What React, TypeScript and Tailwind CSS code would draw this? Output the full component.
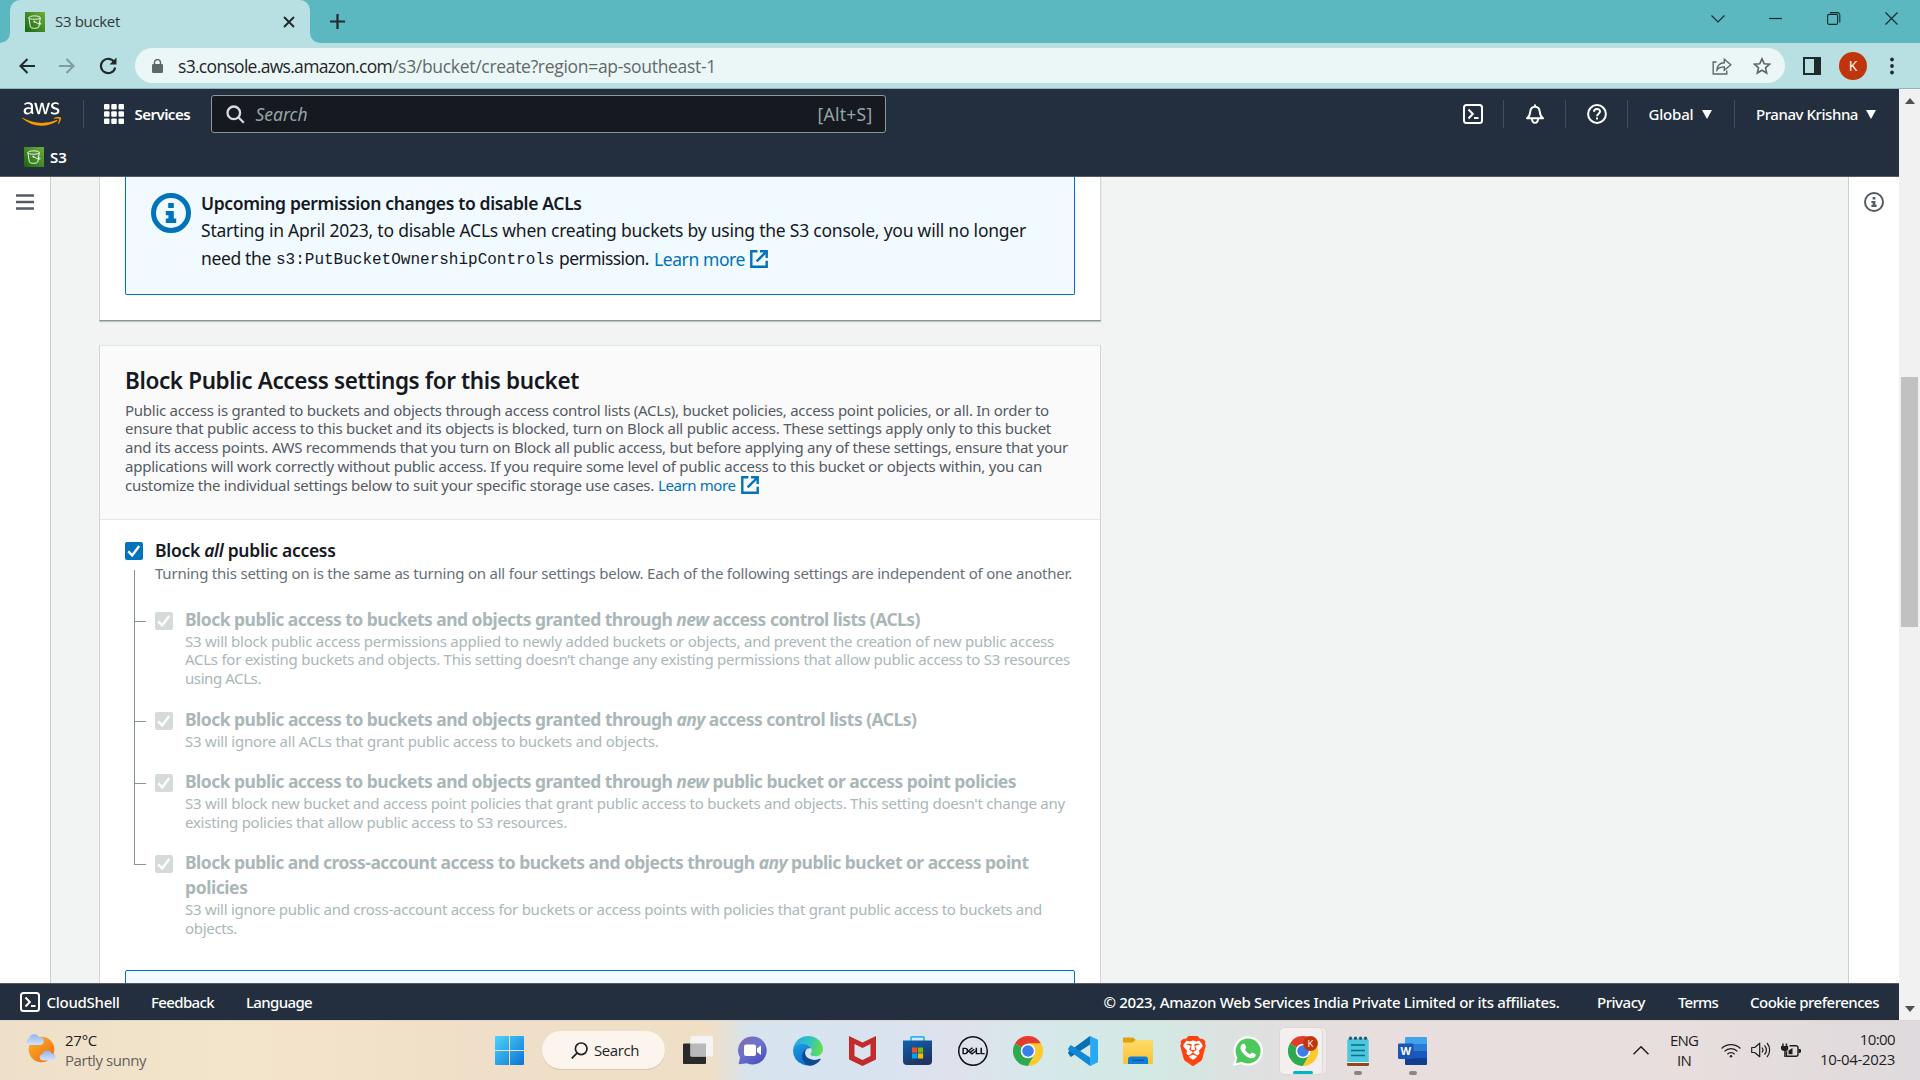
import type { ReactNode } from "react";
import { FaAws } from "react-icons/fa";
import { SiBrave, SiDell } from "react-icons/si";

/* ---------- shared icons ---------- */

function S3Icon() {
  return (
    <svg viewBox="0 0 20 20" className="size-5 shrink-0">
      <defs>
        <linearGradient id="s3" x1="0" y1="1" x2="1" y2="0">
          <stop offset="0" stopColor="#1b660f" />
          <stop offset="1" stopColor="#6cae3e" />
        </linearGradient>
      </defs>
      <rect width="20" height="20" fill="url(#s3)" />
      <g fill="none" stroke="#fff" strokeWidth="0.9">
        <ellipse cx="9.6" cy="5.6" rx="5.7" ry="1.7" />
        <path d="M3.9 5.8 5.4 15c.3 1.7 8.1 1.7 8.4 0l1.5-9.2" />
        <path d="M9.3 9.6c2 1.1 4.6 2.4 6.4 2.6 1 .1.3-1.2-1.2-2" />
      </g>
      <circle cx="9.3" cy="9.6" r="0.9" fill="#fff" />
    </svg>
  );
}

function TerminalIcon() {
  return (
    <svg viewBox="0 0 20 20" className="size-5 shrink-0" fill="none" stroke="#fff" strokeWidth="2">
      <rect x="1" y="1" width="18" height="18" rx="2.5" />
      <path d="m5.500 5.500 4.300 4.500-4.300 4.500M11 14h4.500" />
    </svg>
  );
}

function InfoIcon({ className, ring }: { className: string; ring: number }) {
  return (
    <svg viewBox="0 0 40 40" className={className}>
      <circle cx="20" cy="20" r={20 - ring / 2} fill="none" stroke="currentColor" strokeWidth={ring} />
      <path d="M17.2 10h5.6v5h-5.6zM14.8 18h8v7.5h2.4V30H14.8v-4.5h2.6v-3.3h-2.6z" fill="currentColor" />
    </svg>
  );
}

function ExternalIcon({ className = "" }: { className?: string }) {
  return (
    <svg viewBox="0 0 18 18" className={"inline-block size-[18px] " + className} fill="none" stroke="#0073bb" strokeWidth="2.4">
      <path d="M7.4 1.3H1.3v15.4h15.4v-6M10 1.3h6.7V8M16 2 6.6 11.4" />
    </svg>
  );
}

function Checkbox({ disabled = false }: { disabled?: boolean }) {
  return (
    <span
      className={
        "flex size-[18px] shrink-0 items-center justify-center rounded-[2px] " + (disabled ? "bg-[#d5dbdb]" : "bg-[#0073bb]")
      }
    >
      <svg viewBox="0 0 18 18" className="size-[18px]" fill="none" stroke="#fff" strokeWidth="2.4">
        <path d="m3.2 9.4 4 4 7-9.4" />
      </svg>
    </span>
  );
}

/* ---------- browser chrome ---------- */

function TabStrip() {
  return (
    <div className="flex h-[43px] shrink-0 bg-[#5bb7c0] font-['Open_Sans',sans-serif]">
      <div className="flex w-[10px] items-end bg-[#b8e0e3]">
        <div className="h-full w-full rounded-br-[10px] bg-[#5bb7c0]" />
      </div>
      <div className="flex w-[300px] items-center rounded-t-[10px] bg-[#b8e0e3] pr-3 pl-[15px]">
        <S3Icon />
        <span className="ml-[10px] pb-[2px] text-[15px] leading-5 tracking-[-0.325px] text-[#30393a]">S3 bucket</span>
        <svg viewBox="0 0 12 12" className="mr-[3px] ml-auto size-3" fill="none" stroke="#1f2a2b" strokeWidth="1.9">
          <path d="m1 1 10 10M11 1 1 11" />
        </svg>
      </div>
      <div className="w-[10px] bg-[#b8e0e3]">
        <div className="h-full w-full rounded-bl-[10px] bg-[#5bb7c0]" />
      </div>
      <svg viewBox="0 0 15 15" className="mt-[14px] ml-[10px] size-[15px]" stroke="#1f2a2b" strokeWidth="2.2">
        <path d="M7.5 0v15M0 7.5h15" />
      </svg>
      <div className="mt-3 mr-[22px] ml-auto flex h-[13px] items-center gap-[44px] text-[#10292b]">
        <svg viewBox="0 0 14 13" className="h-[13px] w-[14px]" fill="none" stroke="currentColor" strokeWidth="1.1">
          <path d="m.5 3.500 6.500 6.500 6.500-6.500" />
        </svg>
        <svg viewBox="0 0 14 13" className="h-[13px] w-[14px]" stroke="currentColor" strokeWidth="1.2">
          <path d="M0 6.500h13" />
        </svg>
        <svg viewBox="0 0 14 13" className="h-[13px] w-[14px]" fill="none" stroke="currentColor" strokeWidth="1.1">
          <rect x="0.6" y="2.4" width="10" height="10" rx="1.5" />
          <path d="M3 .6h7.400a2.400 2.400 0 0 1 2.400 2.400v7.400" />
        </svg>
        <svg viewBox="0 0 13 13" className="size-[13px]" stroke="currentColor" strokeWidth="1.1">
          <path d="M.5.5l12 12M12.500.5l-12 12" />
        </svg>
      </div>
    </div>
  );
}

function Toolbar() {
  return (
    <div className="flex h-[46px] shrink-0 items-center border-b border-[#93b4b8] bg-[#b8e0e3] pl-[19px] font-['Open_Sans',sans-serif]">
      <svg viewBox="0 0 16 16" className="size-4" fill="none" stroke="#1f2a2b" strokeWidth="2.1">
        <path d="M16 8H1.800M8.500 1 1.500 8l7 7" />
      </svg>
      <svg viewBox="0 0 16 16" className="ml-6 size-4" fill="none" stroke="#7f9da0" strokeWidth="2.1">
        <path d="M0 8h14.200M7.500 1l7 7-7 7" />
      </svg>
      <svg viewBox="0 0 18 18" className="ml-6 size-[18px]" fill="none" stroke="#1f2a2b" strokeWidth="2.2">
        <path d="M15.300 5.200A7.200 7.200 0 1 0 16.200 10.500" />
        <path d="M17.500.6v7h-7z" fill="#1f2a2b" stroke="none" />
      </svg>
      <div className="ml-[18px] flex h-[35px] w-[1650px] items-center rounded-full bg-[#ebf7f7] pl-[17px] text-[17.5px] leading-6">
        <svg viewBox="0 0 11 14" className="h-[14px] w-[11px]">
          <rect y="5" width="11" height="9" rx="1.200" fill="#5f6668" />
          <path d="M2.500 5.500V3.600a3 3 0 0 1 6 0v1.900" fill="none" stroke="#5f6668" strokeWidth="1.500" />
        </svg>
        <span className="ml-[15px] tracking-[-0.694px] text-[#1f2526]">s3.console.aws.amazon.com</span>
        <span className="tracking-[-0.306px] text-[#62696b]">/s3/bucket/create?region=ap-southeast-1</span>
        <svg viewBox="0 0 20 18" className="ml-auto h-[18px] w-5" fill="none" stroke="#5f6668" strokeWidth="1.400">
          <path d="M4.500 5H1.200v12h13.600v-3.500" />
          <path d="M5 13C5.300 8.500 8 6 12.300 5.800V2.200l6.500 5.600-6.500 5.500V9.900C9 9.900 6.600 10.800 5 13Z" />
        </svg>
        <svg viewBox="0 0 18 18" className="mr-[14px] ml-[21px] size-[18px]" fill="none" stroke="#5f6668" strokeWidth="1.600">
          <path d="m9 1.800 2.200 4.900 5.300.5-4 3.600 1.200 5.200L9 13.200 4.300 16l1.200-5.200-4-3.600 5.300-.5Z" />
        </svg>
      </div>
      <svg viewBox="0 0 18 18" className="ml-[18px] size-[18px]">
        <rect x="1" y="1" width="16" height="16" fill="none" stroke="#1f2a2b" strokeWidth="2" />
        <rect x="11" width="7" height="18" fill="#1f2a2b" />
      </svg>
      <span className="ml-[18px] flex size-7 items-center justify-center rounded-full bg-[#bf360c] text-[14px] text-white">K</span>
      <svg viewBox="0 0 4 18" className="ml-[23px] h-[18px] w-1" fill="#1f2a2b">
        <circle cx="2" cy="2.500" r="1.900" />
        <circle cx="2" cy="9" r="1.900" />
        <circle cx="2" cy="15.500" r="1.900" />
      </svg>
    </div>
  );
}

/* ---------- AWS console ---------- */

function Divider({ className }: { className: string }) {
  return <span className={"h-[28px] w-px shrink-0 bg-[#414d5c] " + className} />;
}

function Caret() {
  return (
    <svg viewBox="0 0 10 9" className="h-[9px] w-[10px] shrink-0" fill="#fff">
      <path d="M0 0h10L5 9z" />
    </svg>
  );
}

function AwsLogo() {
  return (
    <svg viewBox="0 0 41 26" className="h-[26px] w-[41px] shrink-0">
      <defs>
        <clipPath id="letters">
          <rect width="41" height="15.500" />
        </clipPath>
        <clipPath id="smile">
          <rect y="15.500" width="41" height="14" />
        </clipPath>
      </defs>
      <g clipPath="url(#letters)">
        <FaAws x="1" y="-6.500" size={39} color="#fff" />
      </g>
      <g clipPath="url(#smile)">
        <FaAws x="1" y="-6.500" size={39} color="#ff9900" />
      </g>
    </svg>
  );
}

function ConsoleNav() {
  return (
    <div className="h-[88px] shrink-0 border-b border-[#545b64] bg-[#232f3e] text-white">
      <div className="flex h-[50px] items-center pl-[21px]">
        <AwsLogo />
        <Divider className="ml-[21px]" />
        <svg viewBox="0 0 20 20" className="ml-[20px] size-5 shrink-0" fill="#fff">
          {[0, 7.25, 14.5].map((y) =>
            [0, 7.25, 14.5].map((x) => <rect key={`${x}-${y}`} x={x} y={y} width="5.5" height="5.5" rx="1" />),
          )}
        </svg>
        <span className="ml-[10.5px] w-[56px] text-[15px] font-semibold tracking-[-0.523px] whitespace-nowrap">Services</span>
        <div className="ml-5 flex h-[38px] w-[675px] items-center rounded-[3px] border border-[#8d9999] bg-[#16191f] pr-3 pl-[14px] text-[17.5px] text-[#95a5a6]">
          <svg viewBox="0 0 19 19" className="size-[19px]" fill="none" stroke="#d5dbdb" strokeWidth="2.300">
            <circle cx="7.800" cy="7.800" r="6.300" />
            <path d="m12.300 12.300 5.500 5.500" />
          </svg>
          <span className="ml-[11px] italic">Search</span>
          <span className="ml-auto tracking-[0.263px]">[Alt+S]</span>
        </div>
        <span className="ml-auto">
          <TerminalIcon />
        </span>
        <Divider className="ml-[20px]" />
        <svg viewBox="0 0 20 20" className="ml-[21px] size-5 shrink-0" fill="none" stroke="#fff" strokeWidth="2">
          <path d="M10 .5v2M2 14.300c2.500-1.800 3-4 3.200-6.500C5.500 4.500 7.300 2.700 10 2.700s4.500 1.800 4.800 5.100c.2 2.500.7 4.700 3.200 6.500Z" strokeLinejoin="round" />
          <path d="M7 14.500c0 5.800 6 5.800 6 0" />
        </svg>
        <Divider className="ml-[20px]" />
        <svg viewBox="0 0 20 20" className="ml-[21px] size-5 shrink-0" fill="none" stroke="#fff" strokeWidth="2">
          <circle cx="10" cy="10" r="8.900" />
          <path d="M7 7.800C7 4 13 4 13 7.600c0 2-3 2.200-3 4.700M10 13.500v2" />
        </svg>
        <Divider className="ml-[20px]" />
        <span className="ml-[20.5px] w-[45px] text-[15px] font-medium tracking-[-0.177px] whitespace-nowrap">Global</span>
        <span className="ml-2">
          <Caret />
        </span>
        <Divider className="ml-[22px]" />
        <span className="ml-[21.5px] w-[102px] text-[15px] font-medium tracking-[-0.438px] whitespace-nowrap">Pranav Krishna</span>
        <span className="mr-[23px] ml-2">
          <Caret />
        </span>
      </div>
      <div className="flex h-[37px] items-center pb-[1px] pl-6">
        <S3Icon />
        <span className="ml-[6px] text-[15px] font-semibold">S3</span>
      </div>
    </div>
  );
}

type Line = { text: ReactNode; track: string };

const intro: Line[] = [
  { text: "Public access is granted to buckets and objects through access control lists (ACLs), bucket policies, access point policies, or all. In order to", track: "tracking-[-0.261px]" },
  { text: "ensure that public access to this bucket and its objects is blocked, turn on Block all public access. These settings apply only to this bucket", track: "tracking-[-0.235px]" },
  { text: "and its access points. AWS recommends that you turn on Block all public access, but before applying any of these settings, ensure that your", track: "tracking-[-0.257px]" },
  { text: "applications will work correctly without public access. If you require some level of public access to this bucket or objects within, you can", track: "tracking-[-0.230px]" },
];

const settings: { id: string; title: Line[]; body: Line[] }[] = [
  {
    id: "new-acls",
    title: [{ text: <>Block public access to buckets and objects granted through <i>new</i> access control lists (ACLs)</>, track: "tracking-[-0.529px]" }],
    body: [
      { text: "S3 will block public access permissions applied to newly added buckets or objects, and prevent the creation of new public access", track: "tracking-[-0.238px]" },
      { text: "ACLs for existing buckets and objects. This setting doesn’t change any existing permissions that allow public access to S3 resources", track: "tracking-[-0.259px]" },
      { text: "using ACLs.", track: "tracking-[-0.415px]" },
    ],
  },
  {
    id: "any-acls",
    title: [{ text: <>Block public access to buckets and objects granted through <i>any</i> access control lists (ACLs)</>, track: "tracking-[-0.527px]" }],
    body: [{ text: "S3 will ignore all ACLs that grant public access to buckets and objects.", track: "tracking-[-0.207px]" }],
  },
  {
    id: "new-policies",
    title: [{ text: <>Block public access to buckets and objects granted through <i>new</i> public bucket or access point policies</>, track: "tracking-[-0.528px]" }],
    body: [
      { text: "S3 will block new bucket and access point policies that grant public access to buckets and objects. This setting doesn't change any", track: "tracking-[-0.234px]" },
      { text: "existing policies that allow public access to S3 resources.", track: "tracking-[-0.244px]" },
    ],
  },
  {
    id: "any-policies",
    title: [
      { text: <>Block public and cross-account access to buckets and objects through <i>any</i> public bucket or access point</>, track: "tracking-[-0.540px]" },
      { text: "policies", track: "tracking-[-0.432px]" },
    ],
    body: [
      { text: "S3 will ignore public and cross-account access for buckets or access points with policies that grant public access to buckets and", track: "tracking-[-0.263px]" },
      { text: "objects.", track: "tracking-[-0.307px]" },
    ],
  },
];

function Lines({ lines }: { lines: Line[] }) {
  return (
    <>
      {lines.map((l, i) => (
        <span key={i} className={"block whitespace-nowrap " + l.track}>
          {l.text}
        </span>
      ))}
    </>
  );
}

function AclNotice() {
  return (
    <section className="w-[1002px] border-x border-b border-x-[#d0d6d6] border-b-[#879596] bg-white px-[25px] pb-[25px] shadow-[0_1px_1px_rgba(0,28,36,0.2)]">
      <div className="flex h-[118px] rounded-b-[2px] border border-t-0 border-[#0073bb] bg-[#f1faff] pt-[12.5px] pl-[25px]">
        <InfoIcon className="mt-[3.5px] size-10 text-[#0073bb]" ring={5} />
        <div className="ml-[10px] text-[17.5px] leading-[27.5px] text-[#16191f]">
          <p className="font-semibold tracking-[-0.35px]">Upcoming permission changes to disable ACLs</p>
          <p className="tracking-[-0.228px] whitespace-nowrap">
            Starting in April 2023, to disable ACLs when creating buckets by using the S3 console, you will no longer
          </p>
          <p className="flex whitespace-nowrap">
            <span className="w-[75px] tracking-[-0.359px]">need the</span>
            <code className="w-[283px] pt-[2px] font-['Liberation_Mono',monospace] text-[16px]">s3:PutBucketOwnershipControls</code>
            <span className="w-[95px] tracking-[-0.557px]">permission.</span>
            <a className="flex items-center tracking-[-0.416px] text-[#0073bb]">
              Learn more
              <ExternalIcon className="ml-[5px]" />
            </a>
          </p>
        </div>
      </div>
    </section>
  );
}

function BlockAccessCard() {
  return (
    <section className="mt-[24px] w-[1002px] border-x border-t border-x-[#d0d6d6] border-t-[#e3e7e7] bg-white">
      <header className="h-[174px] border-b border-[#e3e7e7] bg-[#fafafa] px-[25px] pt-[21px]">
        <h2 className="text-[22.5px] leading-[27.5px] font-semibold tracking-[-0.38px] text-[#16191f]">
          Block Public Access settings for this bucket
        </h2>
        <div className="mt-[6px] text-[15px] leading-[18.75px] text-[#545b64]">
          <Lines lines={intro} />
          <p className="flex whitespace-nowrap">
            <span className="w-[533px] tracking-[-0.261px]">
              customize the individual settings below to suit your specific storage use cases.
            </span>
            <a className="flex items-center tracking-[-0.406px] text-[#0073bb]">
              Learn more
              <ExternalIcon className="ml-[5px]" />
            </a>
          </p>
        </div>
      </header>
      <div className="px-[25px] pt-[18px]">
        <div className="flex">
          <div className="mt-[4px]">
            <Checkbox />
          </div>
          <div className="ml-3">
            <p className="text-[17.5px] leading-[25px] font-semibold tracking-[-0.291px] text-[#16191f]">
              Block <i>all</i> public access
            </p>
            <p className="mt-[0.75px] text-[15px] leading-[18.75px] tracking-[-0.217px] whitespace-nowrap text-[#687078]">
              Turning this setting on is the same as turning on all four settings below. Each of the following settings are
              independent of one another.
            </p>
          </div>
        </div>
        <ul className="-mt-[13px] ml-[9px] text-[#aab7b8]">
          {settings.map((s, i) => (
            <li key={s.id} className="flex">
              <div className="flex w-3 shrink-0 flex-col">
                <span
                  className={
                    "block shrink-0 border-b border-l border-[#879596] " + (i === 0 ? "h-[52px]" : "h-[15px]")
                  }
                />
                {i < settings.length - 1 && <span className="block grow border-l border-[#879596]" />}
              </div>
              <div className={"flex pb-[18.75px] " + (i === 0 ? "pt-[37px]" : "")}>
                <div className="mt-[5px] ml-[9px]">
                  <Checkbox disabled />
                </div>
                <div className="ml-3">
                  <div className="text-[17.5px] leading-[25px] font-bold">
                    <Lines lines={s.title} />
                  </div>
                  <div className="text-[15px] leading-[18.75px]">
                    <Lines lines={s.body} />
                  </div>
                </div>
              </div>
            </li>
          ))}
        </ul>
        <div className="mt-[13.5px] h-[40px] rounded-[2px] border border-[#0073bb] bg-[#f1faff]" />
      </div>
    </section>
  );
}

function ConsoleFooter() {
  return (
    <div className="flex h-[37px] shrink-0 items-center border-t border-[#545b64] bg-[#232f3e] pl-5 text-[15px] font-medium whitespace-nowrap text-white">
      <TerminalIcon />
      <span className="ml-[6.5px] w-[73px] tracking-[-0.281px]">CloudShell</span>
      <span className="ml-[31.5px] w-[63px] tracking-[-0.635px]">Feedback</span>
      <span className="ml-[32px] w-[66px] tracking-[-0.65px]">Language</span>
      <span className="ml-auto w-[456px] tracking-[-0.319px]">
        © 2023, Amazon Web Services India Private Limited or its affiliates.
      </span>
      <span className="ml-[37.5px] w-[48px] tracking-[-0.475px]">Privacy</span>
      <span className="ml-[33px] w-[40px] tracking-[-0.769px]">Terms</span>
      <span className="mr-5 ml-[32px] w-[129px] tracking-[-0.503px]">Cookie preferences</span>
    </div>
  );
}

function Scrollbar() {
  return (
    <div className="flex w-[21px] shrink-0 flex-col items-center bg-[#f1f1f1]">
      <svg viewBox="0 0 10 6" className="mt-[9px] h-[6px] w-[10px]" fill="#505050">
        <path d="M5 0l5 6H0z" />
      </svg>
      <div className="mt-[273px] h-[250px] w-[17px] bg-[#c1c1c1]" />
      <svg viewBox="0 0 10 6" className="mt-auto mb-2 h-[6px] w-[10px]" fill="#505050">
        <path d="M0 0h10L5 6z" />
      </svg>
    </div>
  );
}

/* ---------- taskbar ---------- */

function ChromeIcon({ badge = false }: { badge?: boolean }) {
  return (
    <svg viewBox="0 0 30 30" className="size-[30px]">
      <path d="M15 15 2 7.500A15 15 0 0 1 28 7.500Z" fill="#e33b2e" />
      <path d="M15 15 2 7.500A15 15 0 0 0 15 30l6.500-11.250Z" fill="#2da94f" />
      <path d="M15 30A15 15 0 0 0 28 7.500H15l6.500 11.250Z" fill="#fdc92c" />
      <path d="M15 7.500h13L21 16Z" fill="#fdc92c" />
      <circle cx="15" cy="15" r="7.300" fill="#fff" />
      <circle cx="15" cy="15" r="5.800" fill="#3b7ded" />
      {badge && (
        <>
          <circle cx="22.500" cy="7.500" r="7.400" fill="#bf360c" />
          <text x="22.500" y="11" textAnchor="middle" fontSize="9.500" fill="#fff" fontFamily="Open Sans">K</text>
        </>
      )}
    </svg>
  );
}

function WeatherIcon() {
  return (
    <svg viewBox="0 0 31 30" className="h-[30px] w-[31px]">
      <defs>
        <linearGradient id="sun" x1="0" y1="0" x2="1" y2="1">
          <stop offset="0" stopColor="#f9b62b" />
          <stop offset="1" stopColor="#f4660f" />
        </linearGradient>
        <linearGradient id="cloud" x1="0" y1="0" x2="0" y2="1">
          <stop offset="0" stopColor="#8fb4ee" />
          <stop offset="1" stopColor="#d3e3fb" />
        </linearGradient>
      </defs>
      <circle cx="15.500" cy="15.500" r="12.800" fill="url(#sun)" />
      <path d="M3.500 11a3.300 3.300 0 0 1-.3-6.500A5.200 5.200 0 0 1 13 3.200 3.700 3.700 0 0 1 14.500 11Z" fill="url(#cloud)" />
      <path d="M16.500 26.500a3.300 3.300 0 0 1 0-6.500 5 5 0 0 1 9.300-.5 3.600 3.600 0 0 1 1.200 7Z" fill="url(#cloud)" />
    </svg>
  );
}

function StartIcon() {
  return (
    <svg viewBox="0 0 29 29" className="size-[29px]">
      <defs>
        <linearGradient id="win" x1="0" y1="0" x2="1" y2="1" gradientUnits="objectBoundingBox">
          <stop offset="0" stopColor="#4fd3fb" />
          <stop offset="1" stopColor="#0a74d4" />
        </linearGradient>
      </defs>
      <path d="M1 0h13v14H0V1a1 1 0 0 1 1-1ZM15 0h13a1 1 0 0 1 1 1v13H15ZM0 15h14v14H1a1 1 0 0 1-1-1ZM15 15h14v13a1 1 0 0 1-1 1H15Z" fill="url(#win)" />
    </svg>
  );
}

function TaskViewIcon() {
  return (
    <svg viewBox="0 0 30 28" className="h-7 w-[30px]">
      <rect y="7.500" width="23" height="20.500" rx="1" fill="#2a2a2a" />
      <rect x="7.500" width="22.500" height="20.500" rx="1" fill="#f4f4f4" />
      <path d="M7.500 7.500H23v13H8.500a1 1 0 0 1-1-1Z" fill="#b9b9b9" />
    </svg>
  );
}

function ChatIcon() {
  return (
    <svg viewBox="0 0 29 29" className="size-[29px]">
      <defs>
        <linearGradient id="chat" x1="0" y1="0" x2="0.700" y2="1">
          <stop offset="0" stopColor="#8b67a8" />
          <stop offset="0.500" stopColor="#6c74cf" />
          <stop offset="1" stopColor="#4e50bd" />
        </linearGradient>
      </defs>
      <path d="M14.500.500A14 14 0 1 1 9 27.300L.6 28.300 2 21.500A14 14 0 0 1 14.500.500Z" fill="url(#chat)" />
      <rect x="6" y="8.500" width="12" height="11.500" rx="2" fill="#fff" />
      <path d="M19 12.500 22.200 9.800c.4-.3.8-.1.800.4v8c0 .5-.4.700-.8.400L19 16Z" fill="#fff" />
    </svg>
  );
}

function EdgeIcon() {
  return (
    <svg viewBox="0 0 30 30" className="size-[30px]">
      <defs>
        <linearGradient id="edgeTop" x1="0" y1="0.300" x2="1" y2="0.500">
          <stop offset="0" stopColor="#2ba8e0" />
          <stop offset="0.500" stopColor="#2fc2c8" />
          <stop offset="1" stopColor="#63e04c" />
        </linearGradient>
        <linearGradient id="edgeLow" x1="0" y1="0" x2="0.600" y2="1">
          <stop offset="0" stopColor="#1f9de2" />
          <stop offset="1" stopColor="#0567c8" />
        </linearGradient>
      </defs>
      <path d="M.3 12.500C1.500 5.300 7.500 0 15 0c8.500 0 15 6.300 15 13 0 4.500-3.400 7.300-7.400 7.300-3 0-5.300-1-5.300-2.300 0-.8 1.500-1.300 1.500-3.600 0-3.200-3.300-6-8.300-6C6 8.400 2.300 9.800.3 12.500Z" fill="url(#edgeTop)" />
      <path d="M0 15C0 10 4.500 8 9.500 8c4 0 7.500 2 8.800 4.500-3.300-.9-6.300 1-6.300 4.800 0 6.200 6 9.700 13.500 7.700A15 15 0 0 1 0 15Z" fill="url(#edgeLow)" />
      <path d="M13.300 12.800c-2.800 2-4.200 4.400-4.200 7.200 0 5 3.500 9 8 9.800 4.500-.4 8.200-2.800 10.500-6.300.4-.7-.1-1-.7-.7-6 2.800-14.900 0-14.900-6 0-1.500.4-2.900 1.300-4Z" fill="#104a92" />
    </svg>
  );
}

function McAfeeIcon() {
  return (
    <svg viewBox="0 0 27 30" className="h-[30px] w-[27px]">
      <path d="M0 0 13.500 6.500 27 0v23.500L13.500 30 0 23.500Z" fill="#c22a2c" />
      <path d="M5.500 8 13.500 12l8-4v12L13.500 24 5.500 20Z" fill="#dbe3ef" />
    </svg>
  );
}

function StoreIcon() {
  return (
    <svg viewBox="0 0 29 29" className="size-[29px]">
      <defs>
        <linearGradient id="store" x1="0" y1="0" x2="0.500" y2="1">
          <stop offset="0" stopColor="#0c63b5" />
          <stop offset="1" stopColor="#22335f" />
        </linearGradient>
      </defs>
      <path d="M8 6V2a1.200 1.200 0 0 1 1.200-1.200h10.600A1.200 1.200 0 0 1 21 2v4" fill="none" stroke="#28b6f0" strokeWidth="1.700" />
      <path d="M0 4.500h29V25a4 4 0 0 1-4 4H4a4 4 0 0 1-4-4Z" fill="url(#store)" />
      <path d="M9 11.500h5.200v5.200H9z" fill="#f05123" />
      <path d="M14.900 11.500h5.200v5.200h-5.200z" fill="#7eba01" />
      <path d="M9 17.400h5.200v5.100H9z" fill="#05a4f0" />
      <path d="M14.900 17.400h5.200v5.100h-5.200z" fill="#ffba08" />
    </svg>
  );
}

function CodeIcon() {
  return (
    <svg viewBox="0 0 30 30" className="size-[30px]">
      <path d="M.5 17.700c-.6-.5-.6-1.300 0-1.900L21 .8c.5-.4 1-.6 1.600-.7V8.200L3.600 20.500c-.5.300-1 .3-1.400 0Z" fill="#0a70b6" />
      <path d="M.5 12.300c-.6.500-.6 1.300 0 1.900L21 29.200c.5.400 1 .6 1.600.7V21.800L3.600 9.500c-.5-.3-1-.3-1.400 0Z" fill="#1289d6" />
      <path d="M22.200.1 29 3.200c.6.300 1 .8 1 1.500v20.600c0 .7-.4 1.200-1 1.500l-6.800 3.100Z" fill="#2aa9f3" />
    </svg>
  );
}

function FolderIcon() {
  return (
    <svg viewBox="0 0 30 27" className="h-[27px] w-[30px]">
      <defs>
        <linearGradient id="folder" x1="0" y1="0" x2="0" y2="1">
          <stop offset="0" stopColor="#ffdb6b" />
          <stop offset="1" stopColor="#fcc233" />
        </linearGradient>
      </defs>
      <path d="M1 .500h9l3 2.500h16a1 1 0 0 1 1 1v8H0v-10.500a1 1 0 0 1 1-1Z" fill="#dfa00c" />
      <path d="M0 5.500h9.500l3-2.500H29a1 1 0 0 1 1 1v21.500a1.500 1.500 0 0 1-1.500 1.500h-27A1.500 1.500 0 0 1 0 25.500Z" fill="url(#folder)" />
      <path d="M5 27v-4.500a3 3 0 0 1 3-3h14a3 3 0 0 1 3 3V27Z" fill="#127fd6" />
      <path d="M9 23.200h12" stroke="#0b5797" strokeWidth="1.200" />
    </svg>
  );
}

function BraveIcon() {
  return (
    <svg viewBox="0 0 30 30" className="size-[30px]">
      <path d="M9 4.500h12l3 4-2.500 12L15 26l-6.500-5.500-2.500-12Z" fill="#fff" />
      <SiBrave size={30} color="#ff4310" />
    </svg>
  );
}

function WhatsAppIcon() {
  return (
    <svg viewBox="0 0 30 30" className="size-[30px]">
      <path d="M0 30 2.200 22A14.800 14.800 0 1 1 8 27.900Z" fill="#fff" />
      <circle cx="15.100" cy="15" r="12.500" fill="#4cc95b" />
      <path d="M3 27.200 4.600 20.500 9.500 25.500Z" fill="#4cc95b" />
      <path d="M10.300 7.800c.5-.2 1.300-.2 1.600.4l1.300 3c.2.6-.9 1.800-1.200 2.200 1.200 2.500 3 3.900 5.300 4.900.5-.3 1.500-1.900 2-1.700l3 1.500c.8.500.2 2.400-.6 3.100-1.300 1.100-2.900 1.200-4.600.7-4.500-1.400-7.600-4.300-9.200-8-.9-2.200-.3-5.100 2.400-6.100Z" fill="#fff" />
    </svg>
  );
}

function NotepadIcon() {
  return (
    <svg viewBox="0 0 22 30" className="h-[30px] w-[22px]">
      <rect x="0.300" y="3" width="21.400" height="25" rx="1.500" fill="#4bc8de" />
      <path d="M0 27h22v1.500a1.500 1.500 0 0 1-1.500 1.500h-19A1.500 1.500 0 0 1 0 28.500Z" fill="#8d4a1b" />
      <path d="M0 26.500h22" stroke="#e9f4f6" />
      <path d="M4 9h14M4 14.500h14M4 19.500h14" stroke="#0b6c87" strokeWidth="1.600" />
      {[3.5, 8.5, 13.5, 18.5].map((x) => (
        <circle key={x} cx={x} cy="2.200" r="1.700" fill="#1b5f74" />
      ))}
    </svg>
  );
}

function WordIcon() {
  return (
    <svg viewBox="0 0 29 28" className="h-7 w-[29px]">
      <path d="M7 1a1 1 0 0 1 1-1h20a1 1 0 0 1 1 1v6.500H7Z" fill="#41a5ee" />
      <path d="M7 7h22v7H7Z" fill="#2b7cd3" />
      <path d="M7 14h22v7H7Z" fill="#185abd" />
      <path d="M7 21h22v6a1 1 0 0 1-1 1H8a1 1 0 0 1-1-1Z" fill="#103f91" />
      <rect y="6.500" width="15.500" height="15.500" rx="1.200" fill="#1a56b8" />
      <text x="7.700" y="18.200" textAnchor="middle" fontSize="11" fontWeight="700" fill="#fff" fontFamily="Open Sans">W</text>
    </svg>
  );
}

function Slot({ left, children }: { left: string; children: ReactNode }) {
  return <div className={"flex h-[60px] shrink-0 items-center " + left}>{children}</div>;
}

function Taskbar() {
  return (
    <div className="flex h-[60px] shrink-0 items-center border-t border-[#ded5c8] bg-[linear-gradient(90deg,#eedfc9_0%,#f3e5cb_12%,#f0dfc8_25%,#f0dfc7_37%,#d7e4ee_39%,#d8e3ef_46%,#dfe2ec_50%,#d6e8ea_54%,#d3e9e4_60%,#e0dfdf_66%,#e8dedd_72%,#e7dedd_88%,#dfdadd_100%)] font-['Open_Sans',sans-serif] text-[15px] leading-5 whitespace-nowrap text-[#1f1f1f]">
      <div className="mb-[4px] ml-[26px]">
        <WeatherIcon />
      </div>
      <div className="ml-[8px] w-[430px] pb-[2px]">
        <p className="tracking-[-0.258px]">27°C</p>
        <p className="tracking-[-0.441px] text-[#66605a]">Partly sunny</p>
      </div>
      <Slot left="">
        <StartIcon />
      </Slot>
      <div className="mb-px ml-[18px] flex h-[38px] w-[123px] items-center rounded-full bg-[#fbf5ed] pl-[29px] shadow-[0_1px_1px_rgba(0,0,0,0.12)]">
        <svg viewBox="0 0 17 17" className="size-[17px]" fill="none" stroke="#1f1f1f" strokeWidth="1.700">
          <circle cx="10.200" cy="6.800" r="5.800" />
          <path d="M6.200 10.800.7 16.300" />
        </svg>
        <span className="ml-[6px] tracking-[-0.417px]">Search</span>
      </div>
      <Slot left="ml-[18px] pb-px">
        <TaskViewIcon />
      </Slot>
      <Slot left="ml-[25px]">
        <ChatIcon />
      </Slot>
      <Slot left="ml-[26px]">
        <EdgeIcon />
      </Slot>
      <Slot left="ml-[26px]">
        <McAfeeIcon />
      </Slot>
      <Slot left="ml-[27px]">
        <StoreIcon />
      </Slot>
      <Slot left="ml-[26px]">
        <SiDell size={30} color="#111" />
      </Slot>
      <Slot left="ml-[25px]">
        <ChromeIcon />
      </Slot>
      <Slot left="ml-[25px]">
        <CodeIcon />
      </Slot>
      <Slot left="ml-[25px]">
        <FolderIcon />
      </Slot>
      <Slot left="ml-[25px]">
        <BraveIcon />
      </Slot>
      <Slot left="ml-[25px]">
        <WhatsAppIcon />
      </Slot>
      <div className="ml-[16px] flex h-[48px] w-[48px] rounded-[5px] border border-[#dcd6d6] bg-[#eee9e9]">
        <div className="flex h-full w-[43px] flex-col items-center rounded-[5px] border-r border-[#dcd6d6] bg-[#f3efee]">
          <div className="mt-2 ml-[4px]">
            <ChromeIcon badge />
          </div>
          <span className="mt-[5px] ml-[4px] h-1 w-5 rounded-full bg-[#00b7c9]" />
        </div>
      </div>
      <div className="ml-[20px] flex h-[60px] flex-col items-center pt-[15px]">
        <NotepadIcon />
        <span className="mt-[5px] h-1 w-2 rounded-full bg-[#8a8585]" />
      </div>
      <div className="ml-[29px] flex h-[60px] flex-col items-center pt-4">
        <WordIcon />
        <span className="mt-[6px] h-1 w-2 rounded-full bg-[#8a8585]" />
      </div>
      <svg viewBox="0 0 16 9" className="ml-auto h-[9px] w-4" fill="none" stroke="#1f1f1f" strokeWidth="1.500">
        <path d="m.5 8.300 7.500-7.500 7.500 7.500" />
      </svg>
      <div className="ml-[21px] w-[28px] pb-[2px] text-center">
        <p className="tracking-[-0.849px]">ENG</p>
        <p className="tracking-[-0.742px]">IN</p>
      </div>
      <svg viewBox="0 0 20 15" className="mb-px ml-[23px] h-[15px] w-5" fill="none" stroke="#1f1f1f" strokeWidth="1.300">
        <path d="M.6 5.500a13.300 13.300 0 0 1 18.800 0M3.500 8.400a9.200 9.200 0 0 1 13 0M6.400 11.200a5.100 5.100 0 0 1 7.200 0" />
        <circle cx="10" cy="13.300" r="1.200" fill="#1f1f1f" stroke="none" />
      </svg>
      <svg viewBox="0 0 20 16" className="mb-px ml-[10px] h-4 w-5" fill="none" stroke="#1f1f1f" strokeWidth="1.200">
        <path d="M.7 5.500h3L8.700 1.200v13.600L3.700 10.500h-3Z" strokeLinejoin="round" />
        <path d="M11 5.500c1.200 1.500 1.200 3.500 0 5M13.500 3.300c2.300 2.800 2.300 6.600 0 9.400M16 1c3.500 4 3.500 10 0 14" />
      </svg>
      <svg viewBox="0 0 20 15" className="mb-px ml-[10px] h-[15px] w-5">
        <path d="M8.500 2.700H15a2 2 0 0 1 2 2v6.600a2 2 0 0 1-2 2H5.500v-5" fill="none" stroke="#1f1f1f" strokeWidth="1.400" />
        <path d="M17.500 6h1.300c.7 0 1.200.5 1.200 1.200v1.600c0 .7-.5 1.200-1.200 1.200h-1.300zM7.500 7.500 11.500 5v6.300h-4zM0 3h1.200V.5h1.500V3h2V.5h1.500V3h1v2.500a2.500 2.500 0 0 1-2.500 2.500v6H3.200V8C1.400 8 0 7 0 5.500z" fill="#1f1f1f" />
      </svg>
      <div className="mr-[25px] ml-[19px] w-[75px] pb-[4px] text-right">
        <p className="tracking-[-0.6px]">10:00</p>
        <p className="tracking-[-0.328px]">10-04-2023</p>
      </div>
    </div>
  );
}

export default function App() {
  return (
    <div className="flex h-[1080px] w-[1920px] flex-col overflow-hidden">
      <TabStrip />
      <Toolbar />
      <div className="flex min-h-0 grow font-['Noto_Sans',sans-serif]">
        <div className="flex min-w-0 grow flex-col">
          <ConsoleNav />
          <div className="flex min-h-0 grow bg-[#f2f3f3]">
            <aside className="w-[51px] shrink-0 border-r border-[#c9cfcf] bg-white pt-[17px] pl-4">
              <svg viewBox="0 0 18 16" className="h-4 w-[18px]" stroke="#545b64" strokeWidth="2.400">
                <path d="M0 1.500h18M0 8h18M0 14.500h18" />
              </svg>
            </aside>
            <main className="ml-[48px] grow overflow-hidden">
              <AclNotice />
              <BlockAccessCard />
            </main>
            <aside className="w-[51px] shrink-0 border-l border-[#c9cfcf] bg-white pt-[15px] pl-[15px]">
              <InfoIcon className="size-5 text-[#545b64]" ring={4} />
            </aside>
          </div>
          <ConsoleFooter />
        </div>
        <Scrollbar />
      </div>
      <Taskbar />
    </div>
  );
}
